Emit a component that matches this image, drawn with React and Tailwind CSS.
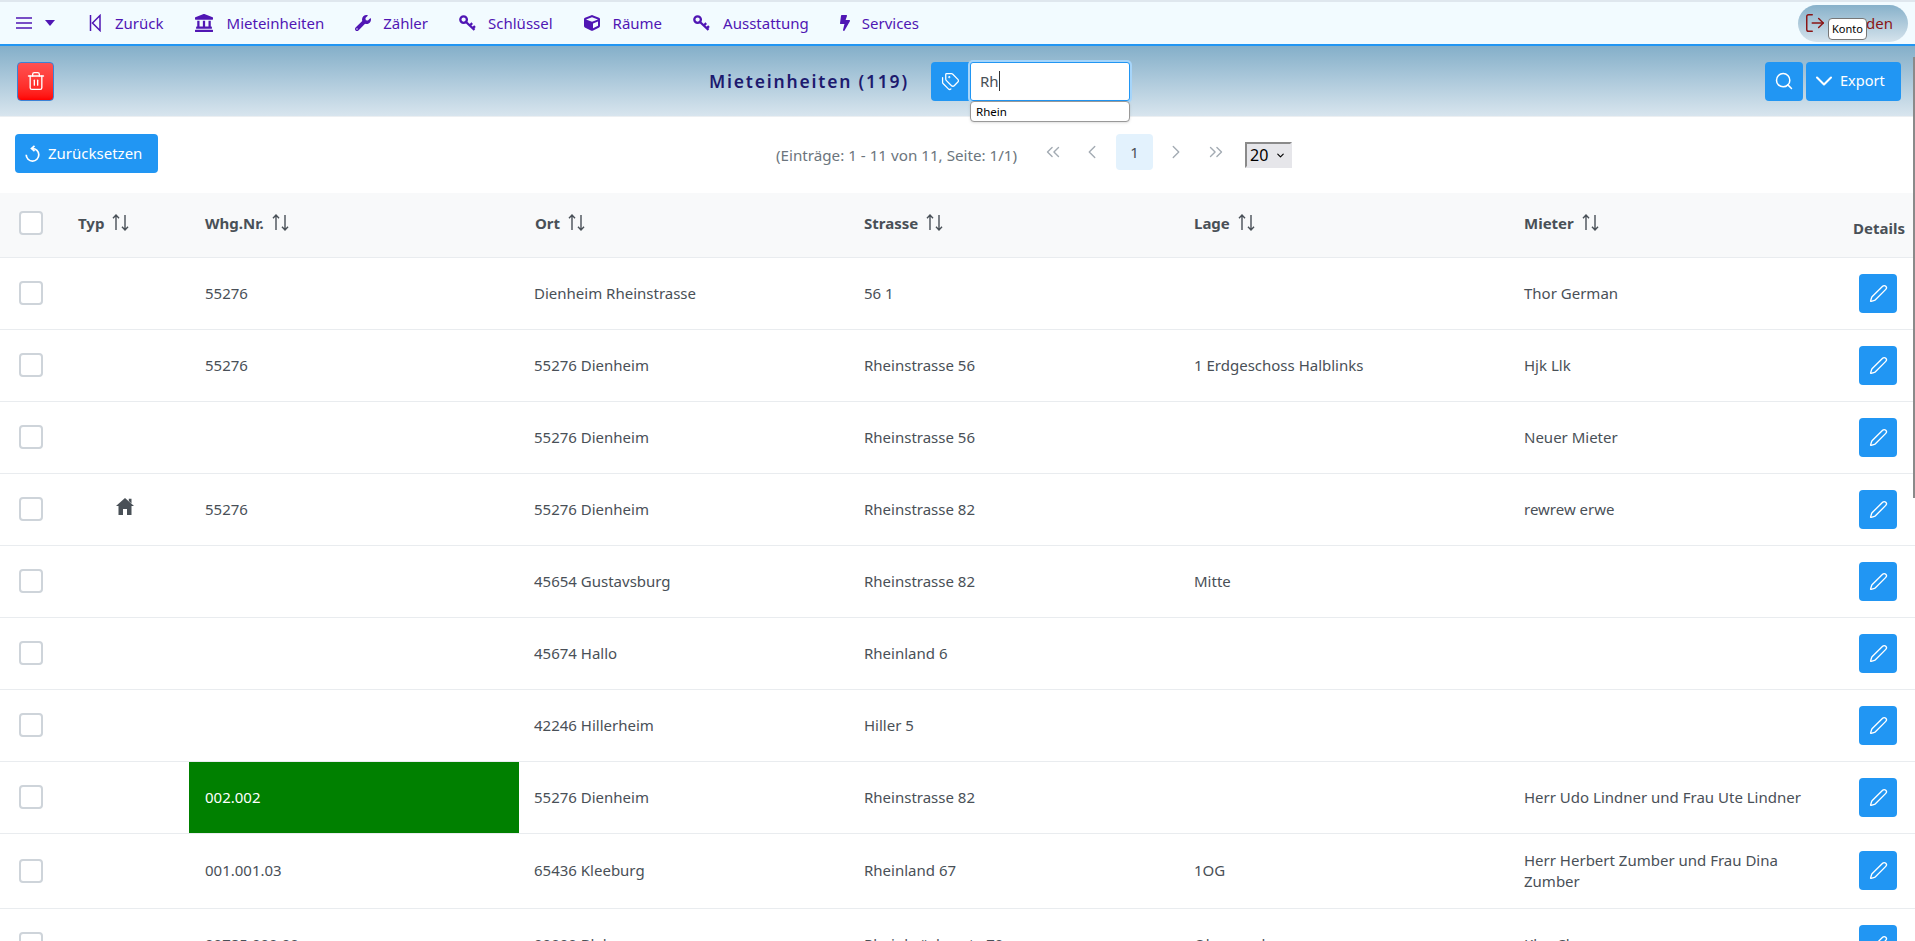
import React from "react";
import { ChevronDown, ChevronLeft, ChevronRight, ChevronsLeft, ChevronsRight, LogOut, Pen, Search, Tags, Trash2 } from "lucide-react";
import { FaBolt, FaCube, FaLandmark, FaWrench } from "react-icons/fa";

const font = "font-['Noto_Sans',sans-serif]";
const purple = "#5016b4";

function NavItem({ icon, label, slot }) {
  return (
    <div className="flex items-center text-[#5016b4] text-[15px]">
      <span className={`flex items-center ${slot}`}>{icon}</span>
      <span>{label}</span>
    </div>
  );
}

function KeyIcon() {
  return (
    <svg width="17" height="16" viewBox="0 0 17 16" fill="none" stroke={purple} strokeWidth="2.3">
      <circle cx="4.6" cy="4.6" r="3.3" />
      <path d="M7 7l8.5 7.8M10.8 10.5l2.4-2.3M13.8 13.2l2.2-2.1" />
    </svg>
  );
}

function HomeIcon() {
  return (
    <svg width="18" height="17" viewBox="0 0 18 17" fill="#495057" className="ml-[38px] mb-[6px]">
      <path d="M9 0 18 8h-2.5v9H11v-6H7v6H2.500V8H0z" />
      <path d="M12.800.8h2.700v4.600l-2.700-2.400z" />
    </svg>
  );
}

function ResetIcon() {
  return (
    <svg width="15" height="17" viewBox="0 0 15 17" fill="none" stroke="white" strokeWidth="1.7">
      <path d="M7.500 3.500A6.300 6.300 0 1 1 1.200 9.800" />
      <path d="M9.500.8 6.500 3.500l3 2.700" />
    </svg>
  );
}

function SortIcon() {
  return (
    <svg width="17" height="17" viewBox="0 0 17 17" fill="none" stroke="#495057" strokeWidth="1.4" className="ml-2 inline-block">
      <path d="M4 16V1M1 4.200 4 1l3 3.200" />
      <path d="M13 1v15M10 12.800l3 3.200 3-3.200" />
    </svg>
  );
}

function Check() {
  return <div className="w-[24px] h-[24px] rounded-[4px] border-2 border-[#ced4da] bg-white" />;
}

function EditBtn() {
  return (
    <button className="w-[38px] h-[39px] rounded-[4px] bg-[#2196f3] flex items-center justify-center">
      <Pen size={19} color="white" strokeWidth={1.7} />
    </button>
  );
}

const rows = [
  { whg: "55276", ort: "Dienheim Rheinstrasse", str: "56 1", lage: "", mieter: "Thor German" },
  { whg: "55276", ort: "55276 Dienheim", str: "Rheinstrasse 56", lage: "1 Erdgeschoss Halblinks", mieter: "Hjk Llk" },
  { whg: "", ort: "55276 Dienheim", str: "Rheinstrasse 56", lage: "", mieter: "Neuer Mieter" },
  { whg: "55276", ort: "55276 Dienheim", str: "Rheinstrasse 82", lage: "", mieter: "rewrew erwe", home: true },
  { whg: "", ort: "45654 Gustavsburg", str: "Rheinstrasse 82", lage: "Mitte", mieter: "" },
  { whg: "", ort: "45674 Hallo", str: "Rheinland 6", lage: "", mieter: "" },
  { whg: "", ort: "42246 Hillerheim", str: "Hiller 5", lage: "", mieter: "" },
  { whg: "002.002", ort: "55276 Dienheim", str: "Rheinstrasse 82", lage: "", mieter: "Herr Udo Lindner und Frau Ute Lindner", green: true },
  { whg: "001.001.03", ort: "65436 Kleeburg", str: "Rheinland 67", lage: "1OG", mieter: "Herr Herbert Zumber und Frau Dina Zumber", tall: true },
  { whg: "00785.000.00", ort: "00000 Blah", str: "Rheinbrückenstr. 70", lage: "Obergeschoss", mieter: "Klor Chan" },
];

const heads = ["Typ", "Whg.Nr.", "Ort", "Strasse", "Lage", "Mieter"];

export default function App() {
  return (
    <div className={`${font} relative h-[941px] w-[1915px] overflow-hidden bg-white text-[#495057]`}>
      <nav className="h-[46px] bg-[#f2fbff] border-t-2 border-[#dfe7ee] border-b-2 border-b-[#2196f3] flex items-center pl-[16px] pr-[7px]">
        <div className="flex items-center gap-[13px] mr-[34px]">
          <svg width="16" height="12" viewBox="0 0 16 12" stroke={purple} strokeWidth="1.6"><path d="M0 1h16M0 6h16M0 11h16" /></svg>
          <svg width="10" height="6" viewBox="0 0 10 6"><path d="M0 0h10L5 6z" fill={purple} /></svg>
        </div>
        <div className="flex items-center gap-[31px]">
          <NavItem slot="w-[26px]" label="Zurück" icon={<svg width="12" height="18" viewBox="0 0 12 18" fill="none" stroke={purple} strokeWidth="1.5"><path d="M1.5 1v16M11 1.5 3.5 9l7.5 7.5z" /></svg>} />
          <NavItem slot="w-[32px]" label="Mieteinheiten" icon={<FaLandmark size={18} color={purple} />} />
          <NavItem slot="w-[28px]" label="Zähler" icon={<FaWrench size={16} color={purple} />} />
          <NavItem slot="w-[29px]" label="Schlüssel" icon={<KeyIcon />} />
          <NavItem slot="w-[29px]" label="Räume" icon={<FaCube size={16} color={purple} />} />
          <NavItem slot="w-[30px]" label="Ausstattung" icon={<KeyIcon />} />
          <NavItem slot="w-[22px]" label="Services" icon={<FaBolt size={16} color={purple} className="-ml-[3px]" />} />
        </div>
        <div className="ml-auto w-[110px] h-[37px] rounded-full bg-gradient-to-b from-[#87b1ca] to-[#d5e3ec] flex items-center gap-[4px] pl-[6px] text-[#8b1414] text-[15px]">
          <LogOut size={22} color="#8b1414" strokeWidth={1.6} className="shrink-0" />
          <span>Beenden</span>
        </div>
      </nav>
      <div className="absolute left-[1828px] top-[18px] h-[22px] w-[39px] text-center rounded-[4px] border border-[#777] bg-white text-black text-[11px] leading-[20px]">Konto</div>

      <header className="relative h-[71px] bg-gradient-to-b from-[#84afc9] to-[#d8e5ee] flex items-center pl-[17px] pr-[14px] border-b border-[#eceff2]">
        <button className="w-[37px] h-[39px] rounded-[4px] border border-[#3b82d6] bg-gradient-to-b from-[#ff5050] to-[#ff0000] flex items-center justify-center">
          <Trash2 size={20} color="white" strokeWidth={1.6} />
        </button>
        <div className="ml-[655px] flex items-center">
          <h1 className="w-[222px] font-semibold text-[17.5px] tracking-[1.8px] text-[#1d1a6e]">Mieteinheiten (119)</h1>
          <button className="w-[38px] h-[39px] rounded-l-[4px] bg-[#2196f3] flex items-center justify-center">
            <Tags size={19} color="white" strokeWidth={1.6} />
          </button>
          <div className="ml-[1px] w-[160px] h-[39px] bg-white rounded-[3px] border border-[#2196f3] ring-[2px] ring-[#a6d5fa] pl-[9px] flex items-center text-[15px] text-[#495057]">
            Rh<span className="w-px h-[20px] bg-[#333]" />
          </div>
        </div>
        <div className="absolute left-[970px] top-[55px] w-[160px] h-[21px] rounded-[4px] border border-[#999] bg-white px-[5px] text-[11.5px] leading-[19px] text-black shadow-sm">Rhein</div>
        <div className="ml-auto flex items-center gap-[3px]">
          <button className="w-[38px] h-[39px] rounded-[4px] bg-[#2196f3] flex items-center justify-center">
            <Search size={20} color="white" strokeWidth={1.8} />
          </button>
          <button className="w-[95px] h-[39px] rounded-[4px] bg-[#2196f3] flex items-center pl-[4px] gap-[2px] text-white text-[14.5px]">
            <ChevronDown size={28} color="white" strokeWidth={1.8} />
            Export
          </button>
        </div>
      </header>

      <div className="relative h-[76px] flex items-center pl-[15px] pb-[4px]">
        <button className="w-[143px] h-[39px] rounded-[4px] bg-[#2196f3] text-white text-[15px] flex items-center pl-[10px] gap-[8px]">
          <ResetIcon />
          Zurücksetzen
        </button>
        <div className="ml-[618px] flex items-center">
          <span className="text-[15.2px] text-[#6c757d] w-[259px] mt-[4px] whitespace-nowrap">(Einträge: 1 - 11 von 11, Seite: 1/1)</span>
          <div className="flex items-center mb-[2px] text-[#a3abb3]">
            <span className="w-[36px] h-[36px] flex items-center justify-center"><ChevronsLeft size={22} strokeWidth={1.5} /></span>
            <span className="ml-[3px] w-[36px] h-[36px] flex items-center justify-center"><ChevronLeft size={22} strokeWidth={1.5} /></span>
            <span className="ml-[6px] w-[37px] h-[36px] rounded-[4px] bg-[#e3f2fd] flex items-center justify-center text-[15px] text-[#495057]">1</span>
            <span className="ml-[5px] w-[36px] h-[36px] flex items-center justify-center"><ChevronRight size={22} strokeWidth={1.5} /></span>
            <span className="ml-[4px] w-[36px] h-[36px] flex items-center justify-center"><ChevronsRight size={22} strokeWidth={1.5} /></span>
          </div>
          <div className="ml-[11px] w-[47px] h-[26px] mt-[4px] bg-[#e6e6ea] border-2 border-t-[#8a8a8a] border-l-[#8a8a8a] border-r-[#e6e6ea] border-b-[#e6e6ea] flex items-center pl-[3px] gap-[7px] text-[16px] text-black">
            20
            <ChevronDown size={11} color="black" strokeWidth={2.5} />
          </div>
        </div>
      </div>

      <table className="w-[1915px] table-fixed border-collapse text-[15px]">
        <colgroup>
          <col className="w-[62px]" />
          <col className="w-[127px]" />
          <col className="w-[330px]" />
          <col className="w-[329px]" />
          <col className="w-[330px]" />
          <col className="w-[330px]" />
          <col className="w-[319px]" />
          <col className="w-[88px]" />
        </colgroup>
        <thead>
          <tr className="h-[64px] bg-[#f8f9fa] border-b border-[#e9ecef]">
            <th className="pl-[19px] pb-[3px]"><Check /></th>
            {heads.map((h) => (
              <th key={h} className="pl-[16px] pb-[4px] text-left font-bold text-[15px] text-[#495057]">
                <span className="inline-flex items-center">{h}<SortIcon /></span>
              </th>
            ))}
            <th className="text-right pr-[10px] pt-[6px] font-bold text-[15px]">Details</th>
          </tr>
        </thead>
        <tbody>
          {rows.map((r, i) => (
            <tr key={i} className={`border-b border-[#e9ecef] ${r.tall ? "h-[75px]" : "h-[72px]"}`}>
              <td className="pl-[19px]"><Check /></td>
              <td className="pl-[16px]">{r.home && <HomeIcon />}</td>
              <td className={`pl-[16px] ${r.green ? "bg-[#008000] text-white" : ""}`}>{r.whg}</td>
              <td className="pl-[15px]">{r.ort}</td>
              <td className="pl-[16px]">{r.str}</td>
              <td className="pl-[16px]">{r.lage}</td>
              <td className="pl-[16px] pr-[16px] leading-[21px]">{r.mieter}</td>
              <td className="pl-[32px]"><EditBtn /></td>
            </tr>
          ))}
        </tbody>
      </table>

      <div className="absolute right-0 top-[57px] h-[441px] w-[2px] bg-[#8a8a8a]" />
    </div>
  );
}
